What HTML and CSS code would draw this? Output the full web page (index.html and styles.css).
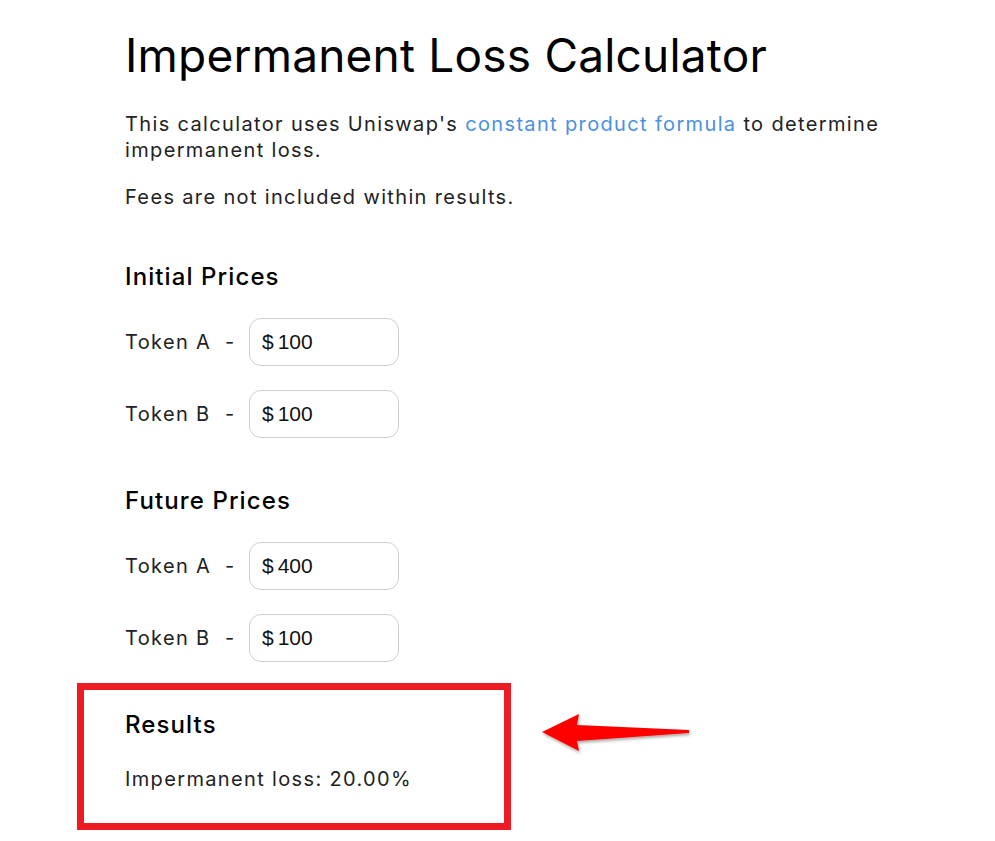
FILE: index.html
```html
<!DOCTYPE html>
<html lang="en">
<head>
    <meta charset="UTF-8">
    <meta name="viewport" content="width=device-width, initial-scale=1.0">
    <title>Impermanent Loss Calculator</title>
    <link rel="stylesheet" href="styles.css">
</head>
<body>
    <main class="page">
        <h1>Impermanent Loss Calculator</h1>
        <p class="intro">This calculator uses Uniswap's <a href="#">constant product formula</a> to determine<br>impermanent loss.</p>
        <p class="note">Fees are not included within results.</p>

        <section class="prices">
            <h2>Initial Prices</h2>
            <div class="token-row">
                <span class="token-name">Token A</span>
                <span class="dash">-</span>
                <label class="price-field"><span>$</span><input type="text" value="100"></label>
            </div>
            <div class="token-row">
                <span class="token-name">Token B</span>
                <span class="dash">-</span>
                <label class="price-field"><span>$</span><input type="text" value="100"></label>
            </div>
        </section>

        <section class="prices future">
            <h2>Future Prices</h2>
            <div class="token-row">
                <span class="token-name">Token A</span>
                <span class="dash">-</span>
                <label class="price-field"><span>$</span><input type="text" value="400"></label>
            </div>
            <div class="token-row">
                <span class="token-name">Token B</span>
                <span class="dash">-</span>
                <label class="price-field"><span>$</span><input type="text" value="100"></label>
            </div>
        </section>

        <div class="results-row">
            <section class="results">
                <h2>Results</h2>
                <p>Impermanent loss: 20.00%</p>
            </section>
            <svg class="arrow" width="152" height="46" viewBox="0 0 152 46">
                <defs>
                    <filter id="shade" x="-10%" y="-20%" width="120%" height="160%">
                        <feDropShadow dx="1" dy="2" stdDeviation="1.5" flood-color="#000" flood-opacity="0.35"/>
                    </filter>
                </defs>
                <polygon points="2,22 39,4 37,15 149,20 149,23 37,31 39,41" fill="#ff0000" filter="url(#shade)"/>
            </svg>
        </div>
    </main>
</body>
</html>
```

FILE: styles.css
```css
/* Page base */
* {
    box-sizing: border-box;
}

body {
    margin: 0;
    background: #fff;
    color: #222;
    font-family: Inter, 'Noto Sans', sans-serif;
}

.page {
    width: 895px;
    padding-left: 125px;
}

h1 {
    margin: 27px 0 0;
    font-size: 46px;
    line-height: 56px;
    font-weight: 400;
    letter-spacing: 0.2px;
    color: #000;
}

p {
    margin: 0;
    font-size: 20px;
    line-height: 26px;
    letter-spacing: 1.35px;
}

.intro {
    margin-top: 28px;
}

.intro a {
    color: #4a90e2;
    text-decoration: none;
}

.note {
    margin-top: 21px;
}

/* Price sections */
h2 {
    margin: 0;
    font-size: 24px;
    line-height: 30px;
    font-weight: 500;
    letter-spacing: 1.1px;
    color: #000;
}

.prices {
    margin-top: 52px;
}

.prices.future {
    margin-top: 48px;
}

.token-row {
    display: grid;
    grid-template-columns: 100px 24px 150px;
    align-items: center;
    margin-top: 24px;
    font-size: 20px;
    letter-spacing: 1.35px;
}

.prices h2 + .token-row {
    margin-top: 26px;
}

.price-field {
    display: flex;
    align-items: center;
    height: 48px;
    padding-left: 12px;
    border: 1px solid #cfcfcf;
    border-radius: 12px;
    font-family: 'Liberation Sans', Arial, sans-serif;
    font-size: 21px;
    letter-spacing: 0;
    color: #111;
}

.price-field input {
    width: 100%;
    border: none;
    outline: none;
    padding: 0 0 0 4px;
    font: inherit;
    color: inherit;
    background: transparent;
}

/* Results */
.results-row {
    display: flex;
    align-items: flex-start;
    gap: 29px;
    margin: 21px 0 0 -48px;
}

.results {
    width: 434px;
    padding: 20px 0 31px 41px;
    border: 7px solid #ed1c24;
}

.results p {
    margin-top: 26px;
}

.arrow {
    margin-top: 27px;
}
```
